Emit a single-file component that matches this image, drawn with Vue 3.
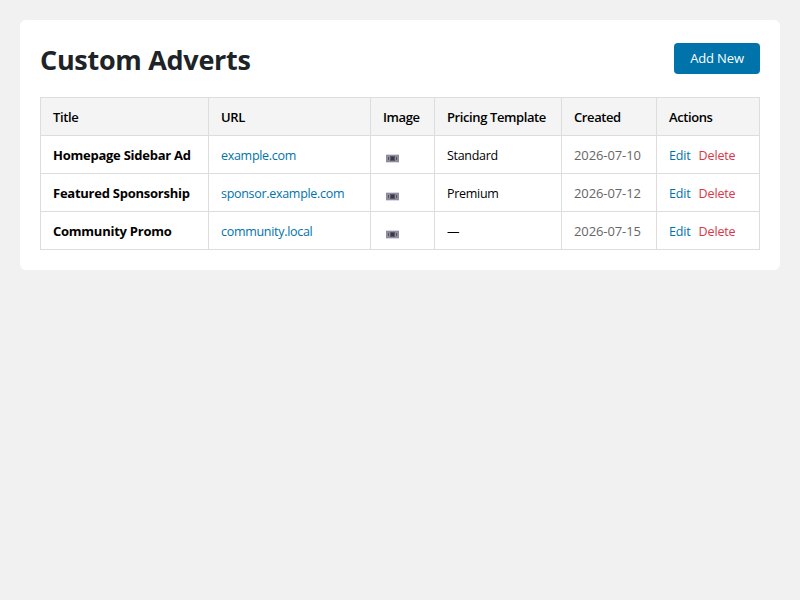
<script setup>
const adverts = [
  { title: 'Homepage Sidebar Ad', url: 'example.com', template: 'Standard', created: '2026-07-10' },
  { title: 'Featured Sponsorship', url: 'sponsor.example.com', template: 'Premium', created: '2026-07-12' },
  { title: 'Community Promo', url: 'community.local', template: '—', created: '2026-07-15' }
]
</script>

<template>
  <div class="page">
    <div class="card">
      <div class="header">
        <h1>Custom Adverts</h1>
        <a class="btn" href="#">Add New</a>
      </div>
      <table>
        <colgroup>
          <col class="col-title" />
          <col class="col-url" />
          <col class="col-image" />
          <col class="col-template" />
          <col class="col-created" />
          <col class="col-actions" />
        </colgroup>
        <thead>
          <tr>
            <th>Title</th>
            <th>URL</th>
            <th>Image</th>
            <th>Pricing Template</th>
            <th>Created</th>
            <th>Actions</th>
          </tr>
        </thead>
        <tbody>
          <tr v-for="ad in adverts" :key="ad.title">
            <td class="title">{{ ad.title }}</td>
            <td><a class="link" href="#">{{ ad.url }}</a></td>
            <td class="image-cell">
              <svg class="thumb" width="13" height="9" viewBox="0 0 13 9">
                <rect width="13" height="9" fill="#dcd8e6" />
                <rect y="1" width="13" height="7" fill="#8f8c9c" />
                <rect x="4" y="2" width="5" height="5" fill="#5a5866" />
                <rect x="5" y="3" width="3" height="3" fill="#3a3844" />
                <rect x="2" y="3" width="1" height="3" fill="#55535f" />
                <rect x="10" y="3" width="1" height="3" fill="#55535f" />
              </svg>
            </td>
            <td>{{ ad.template }}</td>
            <td class="date">{{ ad.created }}</td>
            <td class="actions">
              <a class="link edit" href="#">Edit</a>
              <a class="delete" href="#">Delete</a>
            </td>
          </tr>
        </tbody>
      </table>
    </div>
  </div>
</template>

<style>
body {
  background: #f1f1f1;
}
</style>

<style scoped>
.page {
  padding: 20px;
  font-family: "Open Sans", "Noto Sans", sans-serif;
  font-size: 13px;
  color: #1d2327;
}

.card {
  background: #fff;
  border-radius: 6px;
  padding: 20px;
}

.header {
  display: flex;
  justify-content: space-between;
  align-items: center;
  margin-bottom: 20px;
  height: 37px;
}

h1 {
  margin: 2px 0 0;
  font-size: 27px;
  font-weight: 700;
  line-height: 37px;
  letter-spacing: -0.3px;
}

.btn {
  display: block;
  width: 86px;
  height: 31px;
  line-height: 31px;
  text-align: center;
  letter-spacing: -0.15px;
  background: #0073aa;
  color: #fff;
  border-radius: 4px;
  font-weight: 500;
  text-decoration: none;
}

table {
  width: 719px;
  table-layout: fixed;
  border-collapse: collapse;
  color: #000;
}

.col-title { width: 168px; }
.col-url { width: 162px; }
.col-image { width: 64px; }
.col-template { width: 127px; }
.col-created { width: 95px; }
.col-actions { width: 103px; }

th,
td {
  border: 1px solid #ddd;
  padding: 11px 12px 9px;
  height: 17px;
  line-height: 17px;
  text-align: left;
  white-space: nowrap;
}

td {
  font-size: 12.5px;
  letter-spacing: -0.3px;
}

th {
  background: #f4f4f4;
  font-weight: 600;
  letter-spacing: -0.4px;
}

td.title {
  font-size: 13px;
  font-weight: 700;
  letter-spacing: -0.25px;
}

.link {
  color: #0073aa;
  text-decoration: none;
}

.image-cell {
  line-height: 0;
}

.thumb {
  display: block;
  margin: 6px 0 0 3px;
}

td.date {
  font-size: 13px;
  letter-spacing: -0.1px;
  color: #666;
}

td.actions {
  letter-spacing: -0.15px;
}

.edit {
  margin-right: 8px;
}

.delete {
  color: #dc3545;
  text-decoration: none;
}
</style>
